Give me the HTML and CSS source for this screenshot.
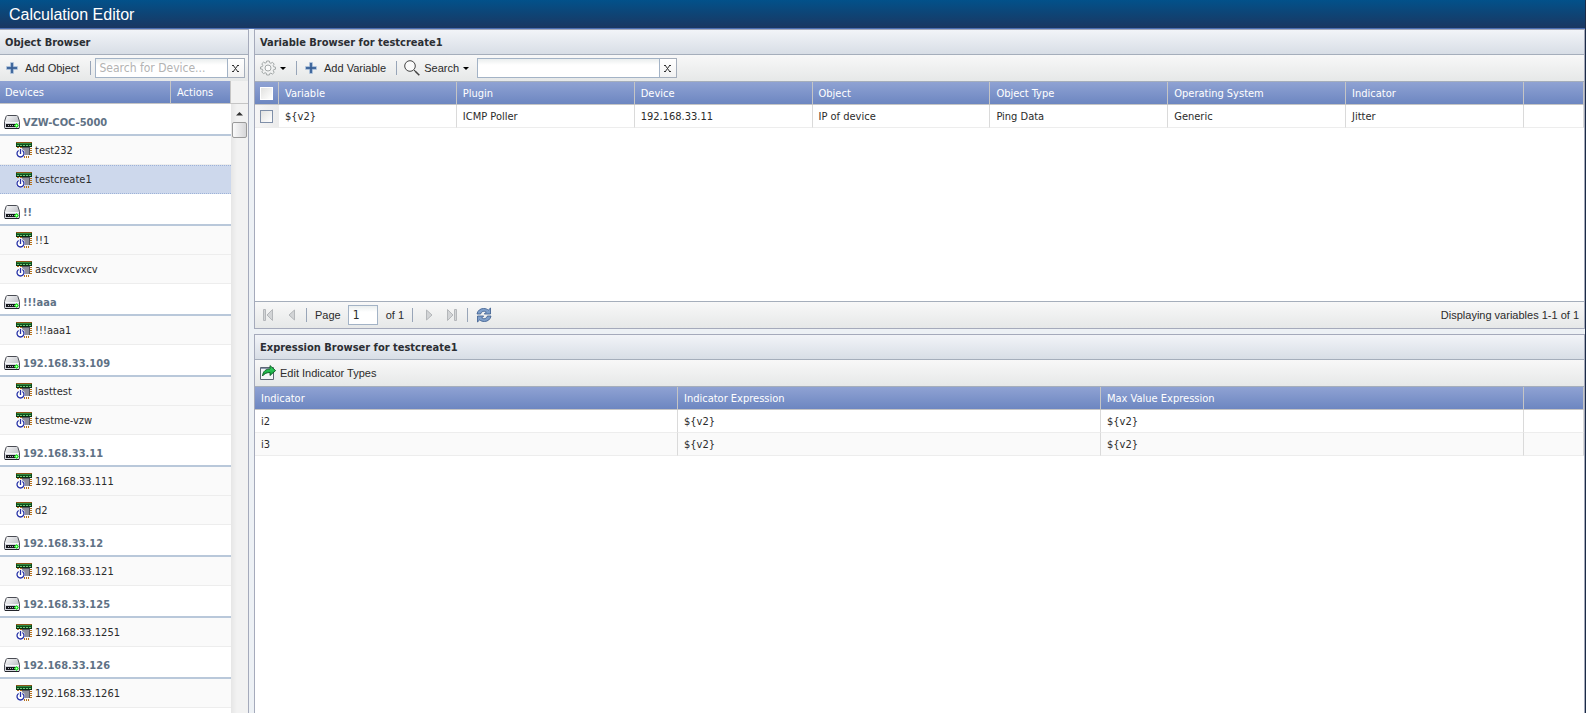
FILE: index.html
```html
<!DOCTYPE html>
<html lang="en">
<head>
<meta charset="utf-8">
<title>Calculation Editor</title>
<link rel="stylesheet" href="styles.css">
</head>
<body>
<svg class="defs" aria-hidden="true">
  <defs>
    <linearGradient id="metal" x1="0" y1="0" x2="1" y2="1">
      <stop offset="0" stop-color="#ffffff"/><stop offset="1" stop-color="#a4a7b0"/>
    </linearGradient>
    <linearGradient id="leaf" x1="0" y1="0" x2="0" y2="1">
      <stop offset="0" stop-color="#3fe06a"/><stop offset="1" stop-color="#0a9a34"/>
    </linearGradient>
    <symbol id="server" viewBox="0 0 16 16">
      <path d="M3.500 1.500h9q1 0 1.400 1L15.500 7.500v6q0 1-1 1h-13q-1 0-1-1v-6L2.100 2.500q.4-1 1.400-1z" fill="url(#metal)" stroke="#4a4c54"/>
      <path d="M1 8h14v6H1z" fill="#d3d5dc"/>
      <path d="M1 8.500h14" stroke="#f6f7f9"/>
      <path d="M2 10h10v3H2z" fill="#15171c"/>
      <path d="M4.500 11v1M6.500 11v1M8.500 11v1" stroke="#b4b7c0"/>
      <path d="M1 14.500h14" stroke="#22242a"/>
      <path d="M11 10h3v3h-3z" fill="#0be00b"/>
      <path d="M10 11h5v1h-5zM12 9h1v5h-1z" fill="#4cf04c"/>
      <path d="M12 11h1v1h-1z" fill="#d8ffd0"/>
    </symbol>
    <symbol id="chip" viewBox="0 0 16 16">
      <path d="M0 0h16v1H0z" fill="#8a5316"/>
      <path d="M0 1h16v4H0z" fill="#0c4d1b"/>
      <path d="M1 1h14v1H1z" fill="#2f8a3e"/>
      <path d="M1 3h2v1H1zM4 3h2v1H4zM7 3h2v1H7zM10 3h2v1h-2zM13 3h2v1h-2z" fill="#72c777"/>
      <path d="M0 4h16v1H0z" fill="#0a2c12"/>
      <path d="M1 5h2v1H1zM4 5h2v1H4z" fill="#b5701a"/>
      <path d="M6 5h8v8H6z" fill="#8f8f9c"/>
      <path d="M6 5h8v1H6zM13 6h1v7h-1z" fill="#55555e"/>
      <path d="M14 6h2v1h-2zM14 8h2v1h-2zM14 10h2v1h-2zM14 12h2v1h-2zM8 14h1v2H8zM10 14h1v2h-1zM12 14h1v2h-1z" fill="#b5701a"/>
      <circle cx="4.500" cy="11.500" r="4.500" fill="#fff"/>
      <path d="M2.700 8.500a3.500 3.500 0 1 0 3.600 0M4.500 7v5" fill="none" stroke="#2632a6" stroke-width="1.300"/>
    </symbol>
    <symbol id="plus" viewBox="0 0 12 12">
      <path d="M4.500.5h3v4h4v3h-4v4h-3v-4h-4v-3h4z" fill="#4f7ab0" stroke="#b9cbe0" stroke-width=".6"/>
      <path d="M6 1v10M1 6h10" stroke="#36598c"/>
    </symbol>
  </defs>
</svg>

<div class="app">
  <header class="app-header"><h1 class="app-title">Calculation Editor</h1></header>
  <div class="workspace">

    <aside class="panel browser">
      <h2 class="panel-title">Object Browser</h2>
      <div class="toolbar">
        <button class="tool tool-first" type="button"><svg class="plus"><use href="#plus"/></svg>Add Object</button>
        <span class="divider"></span>
        <div class="search search-device">
          <input class="search-input" type="text" placeholder="Search for Device..." aria-label="Search for Device">
          <button class="clear" type="button" aria-label="Clear device search"><svg class="x-icon" viewBox="0 0 7 7"><path d="M1 0 6 7M6 0 1 7M0 .5h2M5 .5h2M0 6.500h2M5 6.500h2"/></svg></button>
        </div>
      </div>
      <div class="list-head"><span class="head-devices">Devices</span><span class="head-actions">Actions</span></div>
      <div class="list-wrap">
        <div class="list">
          <h3 class="group"><svg class="icon"><use href="#server"/></svg>VZW-COC-5000</h3>
          <div class="item"><svg class="icon"><use href="#chip"/></svg>test232</div>
          <div class="item selected"><svg class="icon"><use href="#chip"/></svg>testcreate1</div>
          <h3 class="group"><svg class="icon"><use href="#server"/></svg>!!</h3>
          <div class="item"><svg class="icon"><use href="#chip"/></svg>!!1</div>
          <div class="item"><svg class="icon"><use href="#chip"/></svg>asdcvxcvxcv</div>
          <h3 class="group"><svg class="icon"><use href="#server"/></svg>!!!aaa</h3>
          <div class="item"><svg class="icon"><use href="#chip"/></svg>!!!aaa1</div>
          <h3 class="group"><svg class="icon"><use href="#server"/></svg>192.168.33.109</h3>
          <div class="item"><svg class="icon"><use href="#chip"/></svg>lasttest</div>
          <div class="item"><svg class="icon"><use href="#chip"/></svg>testme-vzw</div>
          <h3 class="group"><svg class="icon"><use href="#server"/></svg>192.168.33.11</h3>
          <div class="item"><svg class="icon"><use href="#chip"/></svg>192.168.33.111</div>
          <div class="item"><svg class="icon"><use href="#chip"/></svg>d2</div>
          <h3 class="group"><svg class="icon"><use href="#server"/></svg>192.168.33.12</h3>
          <div class="item"><svg class="icon"><use href="#chip"/></svg>192.168.33.121</div>
          <h3 class="group"><svg class="icon"><use href="#server"/></svg>192.168.33.125</h3>
          <div class="item"><svg class="icon"><use href="#chip"/></svg>192.168.33.1251</div>
          <h3 class="group"><svg class="icon"><use href="#server"/></svg>192.168.33.126</h3>
          <div class="item"><svg class="icon"><use href="#chip"/></svg>192.168.33.1261</div>
        </div>
        <div class="scrollbar">
          <svg class="scroll-up" viewBox="0 0 17 17"><path d="M5 11h7L8.500 7.500z" fill="#333"/></svg>
          <div class="thumb"></div>
        </div>
      </div>
    </aside>

    <main class="main">
      <section class="panel framed variables">
        <h2 class="panel-title">Variable Browser for testcreate1</h2>
        <div class="toolbar ruled">
          <button class="tool" type="button" aria-label="Settings">
            <svg class="icon" viewBox="0 0 16 16" fill="none"><path d="M6.700 1h2.600l.4 1.800 1.200.5 1.600-1 1.700 1.800-1 1.500.5 1.200 1.800.4v2l-1.800.4-.5 1.200 1 1.600-1.800 1.700-1.500-1-1.200.5L9.300 15H6.700l-.4-1.800-1.200-.5-1.600 1-1.700-1.800 1-1.500-.5-1.200L.5 9V7l1.800-.4.5-1.200-1-1.600 1.800-1.700 1.500 1 1.200-.5z" fill="#f0f1f1" stroke="#a3a8a8"/><circle cx="8" cy="8" r="3" fill="#fafafa" stroke="#a3a8a8"/></svg>
            <span class="caret"></span>
          </button>
          <span class="divider"></span>
          <button class="tool tool-plus" type="button"><svg class="plus"><use href="#plus"/></svg>Add Variable</button>
          <span class="divider"></span>
          <button class="tool tool-search" type="button"><svg class="icon" viewBox="0 0 16 16" fill="none" stroke="#444"><circle cx="6" cy="6" r="5.300" fill="#fafafa"/><path d="m10 10 1.200 1.200"/><path d="m11 11 4.300 4.300" stroke-width="1.600"/></svg>Search<span class="caret"></span></button>
          <div class="search search-variable">
            <input class="search-input" type="text" aria-label="Search variables">
            <button class="clear" type="button" aria-label="Clear variable search"><svg class="x-icon" viewBox="0 0 7 7"><path d="M1 0 6 7M6 0 1 7M0 .5h2M5 .5h2M0 6.500h2M5 6.500h2"/></svg></button>
          </div>
        </div>
        <div class="table-area">
          <table class="grid">
            <colgroup><col class="col-check"><col><col><col><col><col><col><col><col class="col-rest"></colgroup>
            <thead><tr><th class="check-cell"><input class="check" type="checkbox" aria-label="Select all variables"></th><th>Variable</th><th>Plugin</th><th>Device</th><th>Object</th><th>Object Type</th><th>Operating System</th><th>Indicator</th><th></th></tr></thead>
            <tbody><tr><td class="check-cell"><input class="check" type="checkbox" aria-label="Select ${v2}"></td><td>${v2}</td><td>ICMP Poller</td><td>192.168.33.11</td><td>IP of device</td><td>Ping Data</td><td>Generic</td><td>Jitter</td><td></td></tr></tbody>
          </table>
        </div>
        <footer class="paging">
          <button class="page-btn" type="button" aria-label="First page"><svg class="icon" viewBox="0 0 16 16" fill="#d2d4d6" stroke="#b4b7ba"><path d="M3.500 2.500h2v11h-2zM12.500 2.500v11L7 8z"/></svg></button>
          <button class="page-btn" type="button" aria-label="Previous page"><svg class="icon" viewBox="0 0 16 16" fill="#d2d4d6" stroke="#b4b7ba"><path d="M11.500 3v10L6 8z"/></svg></button>
          <span class="divider"></span>
          <label class="page-label" for="page">Page</label>
          <input class="page-input" id="page" type="text" value="1">
          <span class="page-of">of 1</span>
          <span class="divider"></span>
          <button class="page-btn" type="button" aria-label="Next page"><svg class="icon" viewBox="0 0 16 16" fill="#d2d4d6" stroke="#b4b7ba"><path d="M5.500 3v10L11 8z"/></svg></button>
          <button class="page-btn" type="button" aria-label="Last page"><svg class="icon" viewBox="0 0 16 16" fill="#d2d4d6" stroke="#b4b7ba"><path d="M3.500 2.500v11L9 8zM10.500 2.500h2v11h-2z"/></svg></button>
          <span class="divider"></span>
          <button class="page-btn" type="button" aria-label="Refresh"><svg class="icon" viewBox="0 0 16 16" fill="#7f9fca" stroke="#3a5a8c" stroke-width=".8"><path d="M1 7C1.500 3.500 4.500 1.500 7.500 1.500c2.200 0 3.700.6 4.800 1.600L14.500 1v6H8.300l2-2C8.500 3.800 5.500 4 4.600 7z"/><path d="M15 9c-.5 3.500-3.500 5.500-6.500 5.500-2.200 0-3.700-.6-4.800-1.600L1.500 15V9h6.200l-2 2c1.800 1.200 4.800 1 5.700-2z"/></svg></button>
          <span class="status">Displaying variables 1-1 of 1</span>
        </footer>
      </section>

      <section class="panel framed expressions">
        <h2 class="panel-title">Expression Browser for testcreate1</h2>
        <div class="toolbar ruled">
          <button class="tool tool-edit" type="button"><svg class="icon" viewBox="0 0 16 16"><path d="M.5 2.500h13v12H.5z" fill="#f4f5f7" stroke="#5d6575"/><path d="M1 3.500h8" stroke="#8b97ad"/><path d="M2.500 11C3 6 6 4 10 4V.6l5.600 5L10 10.500V7.500C7 7.500 4.500 8.500 2.500 11z" fill="url(#leaf)" stroke="#0b5a22" stroke-width=".9"/></svg>Edit Indicator Types</button>
        </div>
        <div class="table-area">
          <table class="grid">
            <colgroup><col><col><col><col class="col-rest"></colgroup>
            <thead><tr><th>Indicator</th><th>Indicator Expression</th><th>Max Value Expression</th><th></th></tr></thead>
            <tbody>
              <tr><td>i2</td><td>${v2}</td><td>${v2}</td><td></td></tr>
              <tr class="alt"><td>i3</td><td>${v2}</td><td>${v2}</td><td></td></tr>
            </tbody>
          </table>
        </div>
      </section>
    </main>
  </div>
</div>
</body>
</html>
```

FILE: styles.css
```css
* { box-sizing: border-box; }

body {
  margin: 0;
  font: 11px/13px "DejaVu Sans Condensed", "DejaVu Sans", sans-serif;
  color: #2b2b2b;
}

button, input { margin: 0; padding: 0; font: inherit; color: inherit; }
button { border: 0; background: none; }
h1, h2, h3 { margin: 0; }

.defs { position: absolute; width: 0; height: 0; }
.icon { flex: none; width: 16px; height: 16px; }

.app {
  display: flex;
  flex-direction: column;
  height: 100vh;
  overflow: hidden;
  background: #edf1f5;
  border-right: 1px solid #1b2b47;
}

.app-header {
  flex: none;
  display: flex;
  align-items: center;
  height: 29px;
  padding: 2px 9px 0;
  background: linear-gradient(#02518a, #1a3761);
  border-bottom: 1px solid #4a6db0;
}

.app-title {
  font: 16px/20px "Liberation Sans", Arial, sans-serif;
  color: #fff;
}

.workspace {
  flex: 1;
  display: flex;
  gap: 5px;
  min-height: 0;
}

.panel {
  display: flex;
  flex-direction: column;
  min-height: 0;
  background: #fff;
  border-top: 1px solid #a5aabb;
  border-right: 1px solid #a5aabb;
}

.framed { border-left: 1px solid #a5aabb; }
.browser { flex: none; width: 249px; }
.main { flex: 1; display: flex; flex-direction: column; gap: 5px; min-width: 0; }
.variables { flex: none; height: 300px; border-bottom: 1px solid #a5aabb; }
.expressions { flex: 1; }

.panel-title {
  flex: none;
  height: 25px;
  padding: 1px 5px 0;
  font-size: 11px;
  line-height: 24px;
  color: #2b2e33;
  background: linear-gradient(#f2f4f8, #d8dee6);
  border-bottom: 1px solid #a5aebb;
}

.toolbar, .paging {
  flex: none;
  display: flex;
  align-items: center;
  height: 26px;
  padding: 0 5px;
  font-family: "Liberation Sans", Arial, sans-serif;
  background: linear-gradient(#f8f8f8, #e6e8e8);
}

.ruled { height: 27px; border-bottom: 1px solid #a5aebb; }

.tool { display: flex; align-items: center; white-space: nowrap; }
.tool-first { padding: 0 11px 0 1px; }
.tool-plus { padding: 0 10px 0 8px; }
.tool-search { gap: 4px; padding: 0 8px 0 7px; }
.tool-edit { gap: 4px; }
.plus { width: 12px; height: 12px; margin-right: 7px; }

.divider { flex: none; width: 1px; height: 14px; background: #98a5b8; }

.caret {
  margin: 0 10px 0 4px;
  border: 3px solid transparent;
  border-top-color: #000;
  border-bottom: 0;
}
.tool-search .caret { margin: 0; }

.search { display: flex; height: 20px; }
.search-device { width: 150px; margin-left: 4px; }
.search-variable { width: 200px; }

.search-input {
  flex: 1;
  min-width: 0;
  padding: 0 3px;
  font: 12px/18px "DejaVu Sans Condensed", "DejaVu Sans", sans-serif;
  background: linear-gradient(#eaeeee, #fff 6px);
  border: 1px solid #a3b3c6;
}
.search-input::placeholder { color: #b3b3b3; opacity: 1; }

.clear {
  display: flex;
  align-items: center;
  justify-content: center;
  width: 17px;
  padding-right: 1px;
  background: linear-gradient(#fff, #f2f2f2);
  border: 1px solid #a5aebb;
  border-left: 0;
}
.x-icon { width: 7px; height: 7px; fill: none; stroke: #333; }

.list-head {
  flex: none;
  display: flex;
  height: 23px;
  padding-right: 17px;
  line-height: 23px;
  color: #fff;
  background: linear-gradient(to left, #f2f2f2 17px, transparent 17px), linear-gradient(#8fa2d3, #6b85c0);
  border-bottom: 1px solid #c5c5c5;
}
.head-devices { flex: 1; padding: 0 5px; border-right: 1px solid #c5c5c5; }
.head-actions { width: 60px; padding: 0 6px; border-right: 1px solid #c5c5c5; }

.list-wrap { flex: 1; display: flex; min-height: 0; overflow: hidden; }
.list { flex: 1; }

.group {
  display: flex;
  align-items: center;
  gap: 3px;
  height: 32px;
  padding: 6px 4px 0;
  font-size: 11px;
  color: #5f7285;
  border-bottom: 2px solid #b9c8da;
}

.item {
  display: flex;
  align-items: center;
  gap: 3px;
  height: 29px;
  padding: 0 16px;
  background: #fafafa;
  border-bottom: 1px solid #ededed;
}
.selected {
  background: #cdd8ec;
  border-top: 1px dotted #9db2d8;
  border-bottom: 1px dotted #9db2d8;
}

.scrollbar { flex: none; width: 17px; background: linear-gradient(to right, #e6e6e6, #f2f2f2 6px); }
.scroll-up { display: block; width: 17px; height: 18px; }
.thumb {
  width: 15px;
  height: 16px;
  margin: 0 1px;
  background: linear-gradient(to right, #fafafa, #d6d6d8);
  border: 1px solid #9a9a9a;
  border-radius: 2px;
}

.table-area { flex: 1; min-height: 0; overflow: hidden; }

.grid { width: 100%; table-layout: fixed; border-collapse: separate; border-spacing: 0; }
.grid th, .grid td {
  height: 23px;
  padding: 0 6px;
  font-weight: normal;
  text-align: left;
  white-space: nowrap;
}
.grid thead tr { background: linear-gradient(#8fa2d3, #6b85c0); }
.grid th { color: #fff; border-right: 1px solid #c5c5c5; border-bottom: 1px solid #c5c5c5; }
.grid td { border-right: 1px solid #dadada; border-bottom: 1px solid #ededed; }
.alt { background: #fafafa; }

.col-check { width: 24px; }
.col-rest { width: 60px; }

.grid .check-cell { padding: 0 5px; line-height: 0; }
.grid td.check-cell { background: linear-gradient(to right, #f6f6f6, #ececec); border-right-color: #ececec; }
.check {
  appearance: none;
  width: 13px;
  height: 13px;
  background: linear-gradient(135deg, #e2e2e0, #fff);
  border: 1px solid #7f8fa8;
}
th .check { border-color: #fff; }

.paging { height: 27px; border-top: 1px solid #a5aebb; }
.page-btn { display: flex; margin-right: 7px; }
.page-label { margin: 0 7px 0 8px; }
.page-of { margin: 0 8px; }
.paging .divider + .page-btn { margin-left: 8px; }
.page-input {
  width: 30px;
  height: 20px;
  padding: 0 4px;
  font: 12px/18px "DejaVu Sans Condensed", "DejaVu Sans", sans-serif;
  background: linear-gradient(#eaeeee, #fff 6px);
  border: 1px solid #a3b3c6;
}
.status { margin-left: auto; }
```
